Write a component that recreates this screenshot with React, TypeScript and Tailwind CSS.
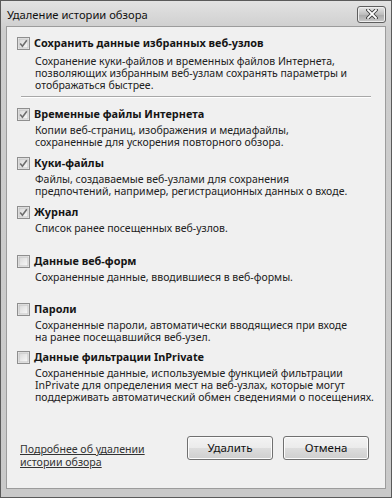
import React from 'react';

const font = { fontFamily: '"Noto Sans", "Open Sans", sans-serif' };

function CheckBox({ checked }: { checked: boolean }) {
  return (
    <svg width="13" height="13" viewBox="0 0 13 13" className="shrink-0">
      <defs>
        <linearGradient id="cbg" x1="0" y1="0" x2="1" y2="1">
          <stop offset="0" stopColor="#d8d8d8" />
          <stop offset="1" stopColor="#fafafa" />
        </linearGradient>
      </defs>
      <rect x="0.5" y="0.5" width="12" height="12" fill="#f4f4f4" stroke="#8e8e8e" />
      <rect x="2" y="2" width="9" height="9" fill="url(#cbg)" stroke="#c4c4c4" strokeWidth="1" />
      {checked && (
        <path d="M3.2 6.6 L5.4 9.2 L9.8 3.2" fill="none" stroke="#6e6e6e" strokeWidth="1.6" />
      )}
    </svg>
  );
}

type Item = { label: string; lines: string[]; checked: boolean; mt: string; dm: string };

const items: Item[] = [
  {
    label: 'Сохранить данные избранных веб-узлов',
    lines: [
      'Сохранение куки-файлов и временных файлов Интернета,',
      'позволяющих избранным веб-узлам сохранять параметры и',
      'отображаться быстрее.',
    ],
    checked: true,
    mt: 'mt-0',
    dm: 'mt-[4px]',
  },
  {
    label: 'Временные файлы Интернета',
    lines: ['Копии веб-страниц, изображения и медиафайлы,', 'сохраненные для ускорения повторного обзора.'],
    checked: true,
    mt: 'mt-[8px]',
    dm: 'mt-[2px]',
  },
  {
    label: 'Куки-файлы',
    lines: ['Файлы, создаваемые веб-узлами для сохранения', 'предпочтений, например, регистрационных данных о входе.'],
    checked: true,
    mt: 'mt-[7px]',
    dm: 'mt-[2px]',
  },
  {
    label: 'Журнал',
    lines: ['Список ранее посещенных веб-узлов.'],
    checked: true,
    mt: 'mt-[7px]',
    dm: 'mt-[2px]',
  },
  {
    label: 'Данные веб-форм',
    lines: ['Сохраненные данные, вводившиеся в веб-формы.'],
    checked: false,
    mt: 'mt-[19px]',
    dm: 'mt-[2px]',
  },
  {
    label: 'Пароли',
    lines: ['Сохраненные пароли, автоматически вводящиеся при входе', 'на ранее посещавшийся веб-узел.'],
    checked: false,
    mt: 'mt-[18px]',
    dm: 'mt-[2px]',
  },
  {
    label: 'Данные фильтрации InPrivate',
    lines: [
      'Сохраненные данные, используемые функцией фильтрации',
      'InPrivate для определения мест на веб-узлах, которые могут',
      'поддерживать автоматический обмен сведениями о посещениях.',
    ],
    checked: false,
    mt: 'mt-[6px]',
    dm: 'mt-[2px]',
  },
];

function Button({ children }: { children: React.ReactNode }) {
  return (
    <button className="w-[86px] h-[24px] rounded-[3px] border border-[#707070] bg-[linear-gradient(#f3f3f3_0%,#ebebeb_50%,#dddddd_51%,#cfcfcf_100%)] shadow-[inset_0_0_0_1px_#fcfcfc] text-[11.5px] text-[#111]">
      {children}
    </button>
  );
}

export default function App() {
  return (
    <div
      className="w-[392px] h-[498px] flex flex-col border border-[#5a5a5a] bg-[linear-gradient(#e2e2e2,#cdcdcd_30px,#c9c9c9)] text-[#151515]"
      style={font}
    >
      {/* Title bar */}
      <div className="h-[25px] flex items-center justify-between pl-[6px] pr-[5px]">
        <span className="text-[11.2px] text-[#111] mt-[3px]">Удаление истории обзора</span>
        <div className="w-[29px] h-[17px] mt-[1px] rounded-[3px] border border-[#5e5e5e] bg-[linear-gradient(#e6e6e6,#bdbdbd_50%,#a8a8a8_51%,#c8c8c8)] shadow-[inset_0_0_0_1px_#eeeeee] flex items-center justify-center">
          <svg width="12" height="10" viewBox="0 0 12 10">
            <path d="M2 1 L10 9 M10 1 L2 9" stroke="#3a3a3a" strokeWidth="3.6" strokeLinecap="square" />
            <path d="M2 1 L10 9 M10 1 L2 9" stroke="#ffffff" strokeWidth="1.8" strokeLinecap="square" />
          </svg>
        </div>
      </div>

      {/* Content */}
      <div className="flex-1 mx-[5px] mb-[8px] border border-[#9c9c9c] bg-[#f0f0f0] flex flex-col pt-[8px] pl-[10px] pr-[14px]">
        {items.map((it, i) => (
          <React.Fragment key={i}>
            <div className={it.mt}>
              <div className="h-[16px] flex items-center gap-[4px]">
                <CheckBox checked={it.checked} />
                <span className="font-bold text-[10.9px] leading-[16px]">{it.label}</span>
              </div>
              <div className={`${it.dm} pl-[18px] text-[10.5px] leading-[12px] text-[#222]`}>
                {it.lines.map((l, j) => (
                  <div key={j} className="whitespace-nowrap">
                    {l}
                  </div>
                ))}
              </div>
            </div>
            {i === 0 && <div className="mt-[5px] ml-[4px] h-[2px] border-t border-[#a8a8a8] border-b-white border-b" />}
          </React.Fragment>
        ))}

        <div className="mt-auto mb-[19px] flex items-start justify-between pl-[3px]">
          <div className="mt-[7px] text-[10.6px] leading-[13px] text-[#333] underline">
            <div>Подробнее об удалении</div>
            <div>истории обзора</div>
          </div>
          <div className="flex gap-[10px] mr-[2px]">
            <Button>Удалить</Button>
            <Button>Отмена</Button>
          </div>
        </div>
      </div>
    </div>
  );
}
